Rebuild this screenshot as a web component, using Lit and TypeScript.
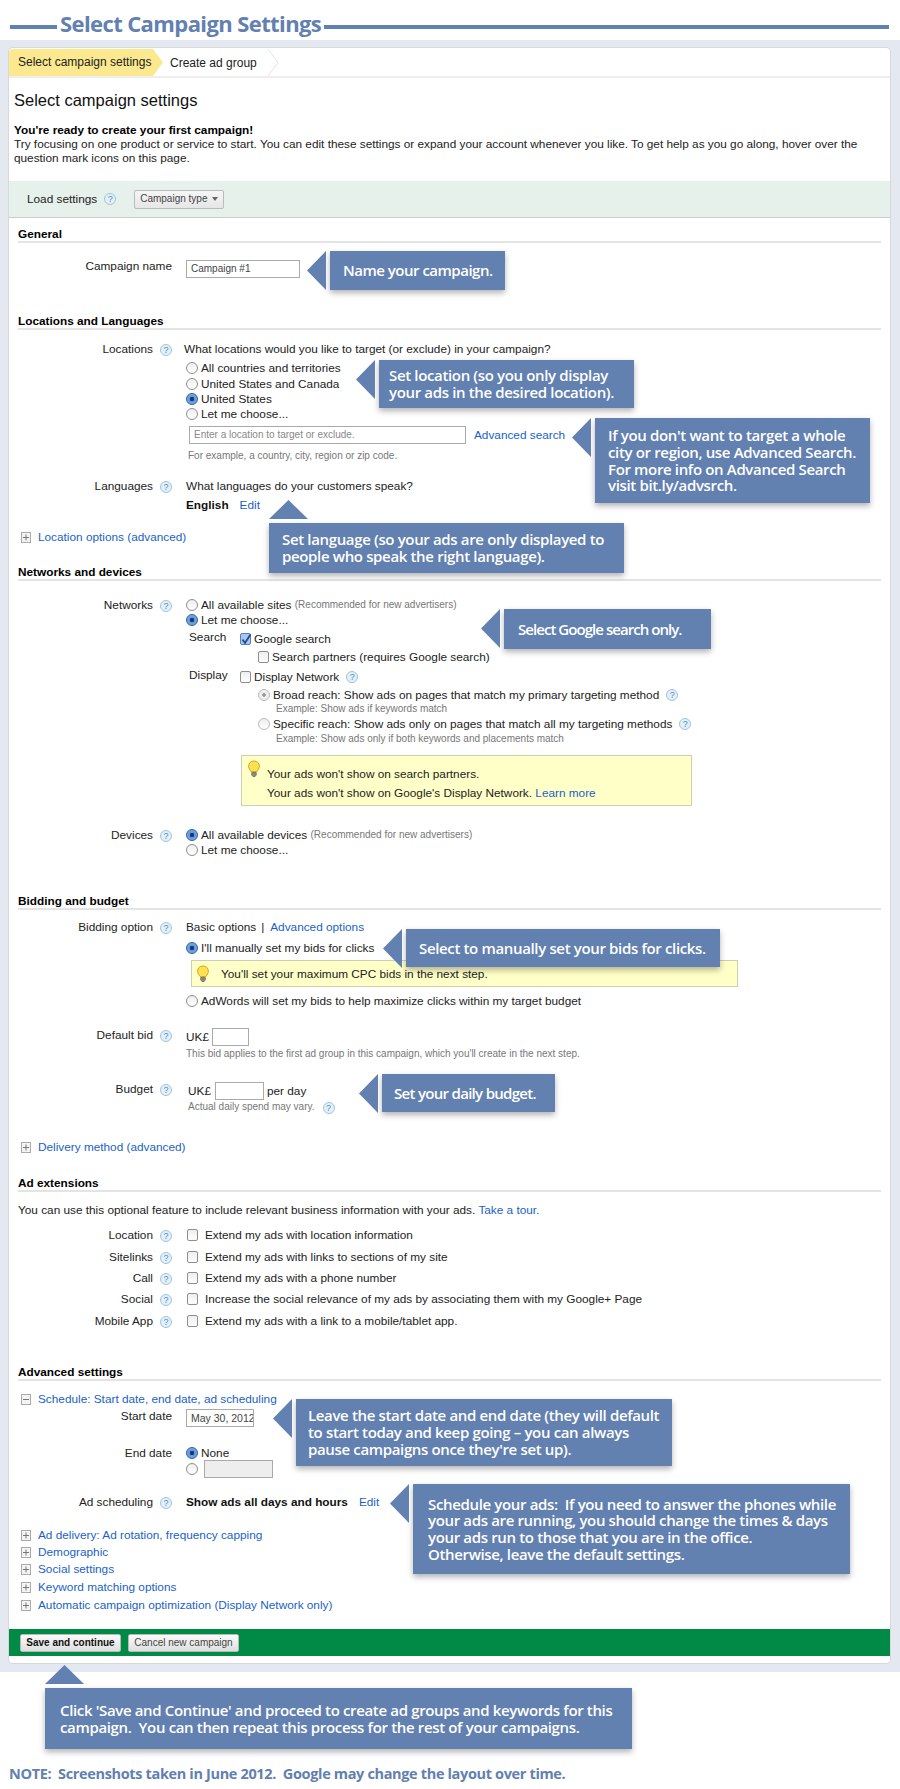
import { LitElement, html, css, unsafeCSS, svg } from "lit";
import { customElement } from "lit/decorators.js";

const margins = unsafeCSS(
  Array.from({ length: 40 }, (_, i) => `.mt${i}{margin-top:${i}px}`).join("")
);

type Callout = { x: number; y: number; w: number; h: number; pad: number; ls?: number; up?: boolean; lines: string[] };

const CALLOUTS: Callout[] = [
  { x: 330, y: 251, w: 175, h: 39, pad: 13, ls: -0.5, lines: ["Name your campaign."] },
  { x: 379, y: 360, w: 255, h: 48, pad: 10, lines: ["Set location (so you only display", "your ads in the desired location)."] },
  { x: 595, y: 418, w: 275, h: 85, pad: 13, lines: ["If you don't want to target a whole", "city or region, use Advanced Search.", "For more info on Advanced Search", "visit bit.ly/advsrch."] },
  { x: 269, y: 523, w: 355, h: 50, pad: 13, up: true, lines: ["Set language (so your ads are only displayed to", "people who speak the right language)."] },
  { x: 504, y: 609, w: 207, h: 40, pad: 14, ls: -0.95, lines: ["Select Google search only."] },
  { x: 406, y: 929, w: 314, h: 38, pad: 13, lines: ["Select to manually set your bids for clicks."] },
  { x: 382, y: 1074, w: 173, h: 38, pad: 12, ls: -0.7, lines: ["Set your daily budget."] },
  { x: 296, y: 1399, w: 376, h: 67, pad: 12, lines: ["Leave the start date and end date (they will default", "to start today and keep going \u2013 you can always", "pause campaigns once they're set up)."] },
  { x: 413, y: 1484, w: 437, h: 90, pad: 15, lines: ["Schedule your ads:  If you need to answer the phones while", "your ads are running, you should change the times & days", "your ads run to those that you are in the office.", "Otherwise, leave the default settings."] },
  { x: 45, y: 1688, w: 587, h: 61, pad: 15, up: true, lines: ["Click 'Save and Continue' and proceed to create ad groups and keywords for this", "campaign.  You can then repeat this process for the rest of your campaigns."] },
];

const help = () => html`<span class="help">?</span>`;
const radio = (on = false, dis = false) =>
  html`<span class="radio ${on ? "on" : ""} ${dis ? "dis" : ""}"></span>`;
const check = (on = false) =>
  html`<span class="check ${on ? "on" : ""}">${on
    ? html`<svg viewBox="0 0 12 12" width="12" height="12"><path d="M2.5 6.5 L5 10 L10.5 1.5" fill="none" stroke="#234a8c" stroke-width="1.8"/></svg>`
    : ""}</span>`;
const pm = (minus = false) =>
  html`<svg class="pm" viewBox="0 0 10 11" width="10" height="11">
    <rect x="0.5" y="0.5" width="9" height="10" fill="#f4f4f4" stroke="#aaa"/>
    <path d="${minus ? "M2 5.5H8" : "M2 5.5H8M5 2.5V8.5"}" stroke="#777" fill="none"/>
  </svg>`;
const bulb = () =>
  html`<svg class="bulb" viewBox="0 0 14 18" width="14" height="18">
    ${svg`<path d="M7 1C3.8 1 1.6 3.3 1.6 6.2c0 2.3 1.6 3.6 2.5 5.4h5.8c.9-1.8 2.5-3.1 2.5-5.4C12.4 3.3 10.2 1 7 1z" fill="#fde24f" stroke="#d8a21e"/>
    <path d="M4.8 12.5h4.4v2.5l-1.2 1.5H6l-1.2-1.5z" fill="#8d8d6a" stroke="#777"/>`}
  </svg>`;

@customElement("app-root")
export class AppRoot extends LitElement {
  static styles = css`
    :host {
      display: block;
      width: 900px;
      height: 1789px;
      position: relative;
      overflow: hidden;
      background: #fff;
      font-family: "Liberation Sans", Arial, sans-serif;
      font-size: 11.8px;
      line-height: 14px;
      color: #222;
    }
    .cond {
      font-family: "Open Sans", sans-serif;
      font-weight: 600;
      letter-spacing: -0.35px;
    }
    .title {
      height: 40px;
      display: flex;
      align-items: center;
      padding: 6px 11px 0 10px;
      box-sizing: border-box;
      gap: 3px;
    }
    .title .rule { height: 4px; background: #6280b0; margin-top: 8px; }
    .title .rule.a { width: 47px; }
    .title .rule.b { flex: 1; }
    .title h1 {
      margin: 0;
      font-size: 22px;
      line-height: 30px;
      color: #6280b0;
      white-space: nowrap;
      font-weight: 700;
      letter-spacing: -0.6px;
    }
    .frame {
      background: #e4e8f0;
      height: 1632px;
      padding: 8px 10px 9px 9px;
      box-sizing: border-box;
    }
    .card {
      background: #fff;
      box-shadow: 0 0 0 1px #d8d8d8;
      border-radius: 4px;
      height: 1615px;
      padding-top: 1px;
      box-sizing: border-box;
    }
    .tabs {
      height: 27px;
      border-bottom: 2px solid #eee;
      display: flex;
      align-items: center;
      position: relative;
      font-size: 12px;
    }
    .tab1 {
      width: 154px;
      height: 27px;
      padding-left: 9px;
      box-sizing: border-box;
      line-height: 27px;
      background: #fbe88f;
      clip-path: polygon(0 0, 144px 0, 154px 50%, 144px 100%, 0 100%);
      white-space: nowrap;
      border-top-left-radius: 4px;
    }
    .tab2 { margin-left: 7px; width: 98px; white-space: nowrap; }
    h2.page {
      margin: 12px 0 0 5px;
      font-size: 16.5px;
      line-height: 20px;
      font-weight: 400;
      color: #111;
    }
    .intro { margin: 13px 10px 0 5px; }
    .intro b { display: block; color: #000; }
    .load {
      margin-top: 16px;
      height: 37px;
      background: #e5f1ea;
      border-bottom: 1px solid #ccc;
      box-sizing: border-box;
      display: flex;
      align-items: center;
      padding-left: 18px;
    }
    .load .help { margin: 0 0 0 7px; }
    .dd {
      margin-left: 18px;
      width: 90px;
      height: 19px;
      box-sizing: border-box;
      border: 1px solid #bbb;
      background: linear-gradient(#f6f6f6, #e6e6e6);
      border-radius: 2px;
      font-size: 10px;
      color: #444;
      display: flex;
      align-items: center;
      gap: 5px;
      padding-left: 5px;
      white-space: nowrap;
    }
    .dd i {
      width: 0; height: 0;
      border-left: 3.5px solid transparent;
      border-right: 3.5px solid transparent;
      border-top: 4px solid #666;
    }
    .sec {
      margin: 0 9px;
      font-weight: 700;
      color: #000;
      border-bottom: 2px solid #e4e4e4;
      height: 16px;
      box-sizing: border-box;
    }
    .row {
      display: grid;
      grid-template-columns: 144px 33px 1fr;
      align-items: start;
    }
    .row.nh { grid-template-columns: 163px 14px 1fr; }
    .lab { text-align: right; white-space: nowrap; }
    .help {
      display: inline-block;
      width: 12px;
      height: 12px;
      margin: 1px 0 0 7px;
      box-sizing: border-box;
      border: 1px solid #9cc6de;
      border-radius: 50%;
      background: #e3f0f8;
      color: #4f8cc0;
      font-size: 9px;
      line-height: 10px;
      text-align: center;
      flex: none;
    }
    .ln { display: flex; align-items: center; height: 14px; white-space: nowrap; }
    .ln .help { margin-top: 0; }
    .radio {
      flex: none;
      width: 12px;
      height: 12px;
      margin-right: 3px;
      box-sizing: border-box;
      border-radius: 50%;
      border: 1px solid #8f8f8f;
      background: linear-gradient(#eee, #fff);
      display: inline-flex;
      align-items: center;
      justify-content: center;
    }
    .radio.on { border-color: #2a5ea8; background: radial-gradient(#1e3a6a 0 2px, #5e97dc 2.5px, #8db7ea 100%); }
    .radio.dis { border-color: #bbb; }
    .radio.dis.on { background: radial-gradient(#999 0 1.5px, #eee 2px); }
    .check {
      flex: none;
      width: 11px;
      height: 12px;
      margin: 0 3px 0 0;
      box-sizing: border-box;
      border: 1px solid #8f8f8f;
      border-radius: 2px;
      background: linear-gradient(#eee, #fff);
      display: inline-flex;
      align-items: center;
      justify-content: center;
    }
    .check.on { border-color: #4f7fc0; background: #a9c6ee; }
    .check svg { flex: none; margin-top: -1px; }
    a { color: #1a5fc8; text-decoration: none; }
    .hint { font-size: 10px; color: #777; }
    .semi { font-weight: 700; color: #111; }
    .gap { margin-left: 11px; }
    .pipe { margin: 0 6px 0 5px; }
    .input {
      border: 1px solid #aaa;
      background: #fff;
      box-sizing: border-box;
      height: 18px;
      font-size: 10px;
      line-height: 16px;
      padding-left: 4px;
      color: #444;
      overflow: hidden;
      white-space: nowrap;
      flex: none;
    }
    .in-name { width: 114px; margin-top: 1px; }
    .in-loc { width: 277px; margin-left: 3px; color: #888; }
    .in-bid { width: 37px; margin-left: 3px; }
    .in-bud { width: 49px; margin-left: 4px; margin-right: 3px; }
    .in-date { width: 68px; font-size: 10.5px; }
    .in-end { width: 69px; background: #eee; margin-left: 3px; }
    .loc { display: flex; align-items: center; height: 18px; gap: 8px; white-space: nowrap; }
    .loc.tight { gap: 0; }
    .ml-2 { margin-left: -2px; }
    .ml2 { margin-left: 2px; }
    .ml72 { margin-left: 72px; }
    .ml90 { margin-left: 90px; }
    .sub {
      display: grid;
      grid-template-columns: 54px 1fr;
      align-items: start;
    }
    .sub > span { padding-left: 3px; margin-top: -2px; }
    .note-box {
      background: #ffffc8;
      border: 1px solid #cfcfb0;
      box-sizing: border-box;
      display: grid;
      align-items: center;
    }
    .tip-a {
      margin-left: 55px;
      width: 451px;
      height: 51px;
      padding: 11px 0 0 25px;
      position: relative;
      align-items: start;
      gap: 5px;
      grid-auto-rows: 14px;
    }
    .tip-a .bulb { position: absolute; left: 5px; top: 4px; }
    .tip-b {
      margin-left: 5px;
      width: 547px;
      height: 27px;
      grid-template-columns: 25px 1fr;
      padding-left: 4px;
    }
    .xp { margin-left: 12px; display: flex; align-items: center; height: 14px; gap: 7px; white-space: nowrap; }
    .plain { margin-left: 9px; white-space: nowrap; }
    .ext { display: flex; align-items: center; height: 14px; white-space: nowrap; }
    .ext .check { margin-right: 7px; margin-left: 1px; }
    .act { display: flex; align-items: center; height: 14px; white-space: nowrap; margin-left: 2px; gap: 1px; }
    .bar {
      margin-top: 17px;
      height: 27px;
      background: #008a46;
      display: flex;
      align-items: center;
      gap: 7px;
      padding-left: 11px;
    }
    .btn {
      height: 18px;
      box-sizing: border-box;
      background: linear-gradient(#fbfbfb, #dedede);
      border: 1px solid #b8b8b8;
      border-radius: 2px;
      font-size: 10px;
      line-height: 16px;
      text-align: center;
      white-space: nowrap;
      color: #444;
    }
    .btn.pri { width: 101px; font-weight: 700; color: #111; }
    .btn.sec2 { width: 111px; }
    .note {
      margin: 92px 0 0 9px;
      font-size: 14.5px;
      line-height: 20px;
      font-weight: 700;
      color: #6280b0;
      white-space: pre;
    }
    .co {
      position: absolute;
      background: #6280b0;
      box-shadow: 0 3px 6px rgba(0, 0, 0, 0.3);
      color: #fff;
      display: flex;
      flex-direction: column;
      justify-content: center;
      font-size: 15px;
      line-height: 16.7px;
      box-sizing: border-box;
    }
    .co div { white-space: pre; }
    .co .ar {
      position: absolute;
      background: #6280b0;
      left: -23px;
      top: 0;
      width: 19px;
      height: 39px;
      clip-path: polygon(0 50%, 100% 0, 100% 100%);
    }
    .co.up .ar {
      left: 0;
      top: -23px;
      width: 39px;
      height: 19px;
      clip-path: polygon(50% 0, 100% 100%, 0 100%);
    }
    ${margins}
  `;

  private row(label: string, content: unknown, mt: number, nh = false) {
    return html`<div class="row mt${mt} ${nh ? "nh" : ""}">
      <div class="lab">${label}</div>
      <div>${nh ? "" : help()}</div>
      <div>${content}</div>
    </div>`;
  }

  private xp(text: string, mt: number, minus = false) {
    return html`<div class="xp mt${mt}">${pm(minus)}<a>${text}</a></div>`;
  }

  private ext(label: string, text: string, mt: number) {
    return this.row(label, html`<div class="ext">${check()}${text}</div>`, mt);
  }

  render() {
    return html`
      <div class="title">
        <div class="rule a"></div>
        <h1 class="cond">Select Campaign Settings</h1>
        <div class="rule b"></div>
      </div>
      <div class="frame">
        <div class="card">
          <div class="tabs">
            <div class="tab1">Select campaign settings</div>
            <div class="tab2">Create ad group</div>
            <svg width="12" height="27" viewBox="0 0 12 27"><path d="M0 0L10 13.5L0 27" fill="none" stroke="#e2e2e2"/></svg>
          </div>
          <h2 class="page">Select campaign settings</h2>
          <div class="intro">
            <b>You're ready to create your first campaign!</b>
            Try focusing on one product or service to start. You can edit these settings or expand your account whenever you like. To get help as you go along, hover over the question mark icons on this page.
          </div>
          <div class="load">Load settings ${help()}<div class="dd">Campaign type<i></i></div></div>

          <div class="sec mt9">General</div>
          ${this.row("Campaign name", html`<div class="input in-name">Campaign #1</div>`, 16, true)}

          <div class="sec mt36">Locations and Languages</div>
          ${this.row("Locations", html`
            <div class="ln ml-2">What locations would you like to target (or exclude) in your campaign?</div>
            <div class="ln mt5">${radio()}All countries and territories</div>
            <div class="ln mt2">${radio()}United States and Canada</div>
            <div class="ln mt1">${radio(true)}United States</div>
            <div class="ln mt1">${radio()}Let me choose...</div>
            <div class="loc mt5"><div class="input in-loc">Enter a location to target or exclude.</div><a>Advanced search</a></div>
            <div class="ln mt5 hint ml2">For example, a country, city, region or zip code.</div>
          `, 12)}
          ${this.row("Languages", html`
            <div class="ln">What languages do your customers speak?</div>
            <div class="ln mt5"><span class="semi">English</span><a class="gap">Edit</a></div>
          `, 16)}
          ${this.xp("Location options (advanced)", 18)}

          <div class="sec mt21">Networks and devices</div>
          ${this.row("Networks", html`
            <div class="ln">${radio()}All available sites&nbsp;<span class="hint">(Recommended for new advertisers)</span></div>
            <div class="ln mt1">${radio(true)}Let me choose...</div>
            <div class="sub mt5"><span>Search</span><div class="ln">${check(true)}Google search</div></div>
            <div class="ln mt4 ml72">${check()}Search partners (requires Google search)</div>
            <div class="sub mt6"><span>Display</span><div class="ln">${check()}Display Network ${help()}</div></div>
            <div class="ln mt4 ml72">${radio(true, true)}Broad reach: Show ads on pages that match my primary targeting method ${help()}</div>
            <div class="ln hint ml90">Example: Show ads if keywords match</div>
            <div class="ln mt1 ml72">${radio(false, true)}Specific reach: Show ads only on pages that match all my targeting methods ${help()}</div>
            <div class="ln mt1 hint ml90">Example: Show ads only if both keywords and placements match</div>
            <div class="note-box tip-a mt9">
              ${bulb()}
              <div>Your ads won't show on search partners.</div>
              <div>Your ads won't show on Google's Display Network. <a>Learn more</a></div>
            </div>
          `, 17)}
          ${this.row("Devices", html`
            <div class="ln">${radio(true)}All available devices&nbsp;<span class="hint">(Recommended for new advertisers)</span></div>
            <div class="ln mt1">${radio()}Let me choose...</div>
          `, 22)}

          <div class="sec mt37">Bidding and budget</div>
          ${this.row("Bidding option", html`
            <div class="ln">Basic options<span class="pipe">|</span><a>Advanced options</a></div>
            <div class="ln mt7">${radio(true)}I'll manually set my bids for clicks</div>
            <div class="note-box tip-b mt5">${bulb()}<div>You'll set your maximum CPC bids in the next step.</div></div>
            <div class="ln mt7">${radio()}AdWords will set my bids to help maximize clicks within my target budget</div>
          `, 10)}
          ${this.row("Default bid", html`
            <div class="loc tight">UK£<div class="input in-bid"></div></div>
            <div class="ln mt1 hint">This bid applies to the first ad group in this campaign, which you'll create in the next step.</div>
          `, 20)}
          ${this.row("Budget", html`
            <div class="loc tight ml2">UK£<div class="input in-bud"></div>per day</div>
            <div class="act hint">Actual daily spend may vary. ${help()}</div>
          `, 21)}
          ${this.xp("Delivery method (advanced)", 26)}

          <div class="sec mt22">Ad extensions</div>
          <div class="plain mt11">You can use this optional feature to include relevant business information with your ads. <a>Take a tour.</a></div>
          ${this.ext("Location", "Extend my ads with location information", 11)}
          ${this.ext("Sitelinks", "Extend my ads with links to sections of my site", 8)}
          ${this.ext("Call", "Extend my ads with a phone number", 7)}
          ${this.ext("Social", "Increase the social relevance of my ads by associating them with my Google+ Page", 7)}
          ${this.ext("Mobile App", "Extend my ads with a link to a mobile/tablet app.", 8)}

          <div class="sec mt37">Advanced settings</div>
          ${this.xp("Schedule: Start date, end date, ad scheduling", 11, true)}
          ${this.row("Start date", html`<div class="input in-date">May 30, 2012</div>`, 3, true)}
          ${this.row("End date", html`
            <div class="ln">${radio(true)}None</div>
            <div class="loc tight">${radio()}<div class="input in-end"></div></div>
          `, 19, true)}
          ${this.row("Ad scheduling", html`<div class="ln"><span class="semi">Show ads all days and hours</span><a class="gap">Edit</a></div>`, 17)}
          ${this.xp("Ad delivery: Ad rotation, frequency capping", 19)}
          ${this.xp("Demographic", 3)}
          ${this.xp("Social settings", 3)}
          ${this.xp("Keyword matching options", 4)}
          ${this.xp("Automatic campaign optimization (Display Network only)", 4)}
          <div class="bar">
            <div class="btn pri">Save and continue</div>
            <div class="btn sec2">Cancel new campaign</div>
          </div>
        </div>
      </div>
      <div class="note cond">NOTE:  Screenshots taken in June 2012.  Google may change the layout over time.</div>
      ${CALLOUTS.map(
        (c) => html`<div
          class="co cond ${c.up ? "up" : ""}"
          style="left:${c.x}px;top:${c.y}px;width:${c.w}px;height:${c.h}px;padding-left:${c.pad}px;${c.ls ? `letter-spacing:${c.ls}px` : ""}"
        >
          <i class="ar"></i>
          ${c.lines.map((l) => html`<div>${l}</div>`)}
        </div>`
      )}
    `;
  }
}
